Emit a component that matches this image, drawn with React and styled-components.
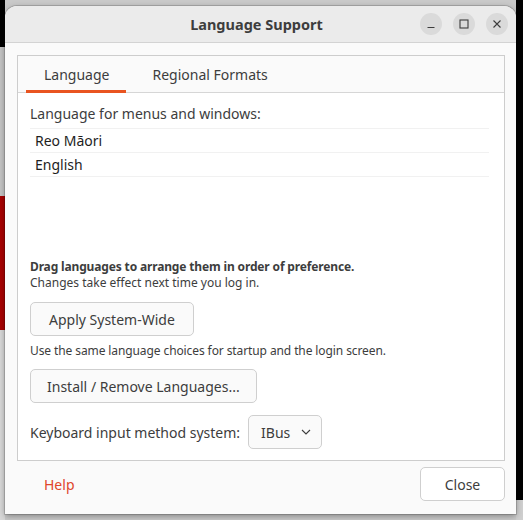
import React, { useState } from "react"
import styled, { createGlobalStyle } from "styled-components"

const GlobalStyle = createGlobalStyle`
  html, body {
    margin: 0;
    padding: 0;
    width: 523px;
    height: 520px;
    overflow: hidden;
  }
  body {
    font-family: "Noto Sans", "Open Sans", sans-serif;
    color: #3d3d3d;
  }
`

const Desktop = styled.div`
  width: 523px;
  height: 520px;
  box-sizing: border-box;
  padding: 6px 7px 0 5px;
  background:
    linear-gradient(to bottom, #000 0, #000 47px, #c4c4c4 47px, #c4c4c4 196px, #a80000 196px, #a80000 330px, #d8d8d8 330px) left top / 5px 100% no-repeat,
    linear-gradient(to bottom, #000 0, #000 500px, #cfcfcf 500px) right top / 7px 100% no-repeat,
    #c9c9c9;
`

const Window = styled.div`
  width: 511px;
  height: 508px;
  background: #fafafa;
  border-radius: 12px 12px 0 0;
  box-shadow: 0 0 0 1px rgba(0, 0, 0, 0.15), 0 2px 6px rgba(0, 0, 0, 0.35);
  display: flex;
  flex-direction: column;
  overflow: hidden;
`

const TitleBar = styled.div`
  height: 36px;
  flex: none;
  background: #ebebeb;
  border-bottom: 1px solid #d3d3d3;
  display: grid;
  grid-template-columns: 1fr auto 1fr;
  align-items: center;
  padding: 0 8px 0 0;
`

const Title = styled.div`
  grid-column: 2;
  font-weight: 700;
  font-size: 14.5px;
  color: #3d3d3d;
`

const Controls = styled.div`
  grid-column: 3;
  justify-self: end;
  display: flex;
  gap: 11px;
`

const CtrlButton = styled.button`
  width: 22px;
  height: 22px;
  border-radius: 50%;
  border: none;
  background: #dadada;
  padding: 0;
  display: flex;
  align-items: center;
  justify-content: center;
  color: #3d3d3d;
`

const Body = styled.div`
  flex: 1;
  display: flex;
  flex-direction: column;
  padding: 12px 11px 12px 12px;
`

const Frame = styled.div`
  height: 406px;
  box-sizing: border-box;
  border: 1px solid #cdcdcd;
  display: flex;
  flex-direction: column;
`

const TabHeader = styled.div`
  height: 37px;
  flex: none;
  box-sizing: border-box;
  border-bottom: 1px solid #d6d6d6;
  background: #fafafa;
  display: flex;
  gap: 8px;
  padding-left: 8px;
`

const Tab = styled.div`
  padding: 0 17px 0 18px;
  display: flex;
  align-items: center;
  font-size: 14px;
  color: #3d3d3d;
  position: relative;
  box-sizing: border-box;
  &::after {
    content: "";
    position: absolute;
    left: 0;
    right: 0;
    bottom: -1px;
    height: 3px;
    background: ${(p) => (p.$active ? "#e95420" : "transparent")};
  }
`

const Content = styled.div`
  flex: 1;
  background: #fff;
  padding: 12px 13px 0 12px;
  display: flex;
  flex-direction: column;
`

const Label = styled.div`
  font-size: 14px;
  color: #3d3d3d;
  line-height: 18px;
`

const List = styled.div`
  margin-top: 5px;
  border-top: 1px solid #f1f1f1;
  margin-right: 2px;
`

const Row = styled.div`
  height: 23px;
  border-bottom: 1px solid #f1f1f1;
  display: flex;
  align-items: center;
  padding-left: 5px;
  font-size: 14px;
  color: #1e1e1e;
`

const Hint = styled.div`
  margin-top: 82px;
  font-size: 12px;
  line-height: 16px;
  color: #3d3d3d;
`

const Strong = styled.div`
  font-weight: 700;
  letter-spacing: -0.15px;
`

const Button = styled.button`
  font-family: inherit;
  font-size: 14px;
  color: #3d3d3d;
  background: #fafafa;
  border: 1px solid #cfcfcf;
  border-radius: 5px;
  height: 34px;
  padding: 0 ${(p) => p.$px || 16}px;
  align-self: flex-start;
  margin-top: ${(p) => p.$mt || 0}px;
`

const Note = styled.div`
  font-size: 12px;
  letter-spacing: -0.1px;
  margin-top: 6px;
  color: #3d3d3d;
`

const InputRow = styled.div`
  margin-top: 12px;
  display: flex;
  align-items: center;
  gap: 8px;
  font-size: 14px;
`

const Select = styled.button`
  font-family: inherit;
  font-size: 14px;
  color: #3d3d3d;
  background: #fafafa;
  border: 1px solid #cfcfcf;
  border-radius: 5px;
  height: 34px;
  padding: 0 10px 0 12px;
  display: flex;
  align-items: center;
  gap: 11px;
`

const Footer = styled.div`
  display: flex;
  justify-content: space-between;
  align-items: center;
  margin-top: 6px;
`

const HelpLink = styled.span`
  color: #e0462b;
  font-size: 14px;
  margin-left: 27px;
`

const CloseButton = styled(Button)`
  width: 85px;
  padding: 0;
  background: #fff;
  align-self: center;
`

export default function App() {
  const [tab, setTab] = useState(0)
  const langs = ["Reo Māori", "English"]

  return (
    <>
      <GlobalStyle />
      <Desktop>
        <Window>
          <TitleBar>
            <Title>Language Support</Title>
            <Controls>
              <CtrlButton aria-label="Minimize">
                <svg width="10" height="10" viewBox="0 0 10 10">
                  <path d="M1.5 8.5h7" stroke="#3d3d3d" strokeWidth="1.1" />
                </svg>
              </CtrlButton>
              <CtrlButton aria-label="Maximize">
                <svg width="10" height="10" viewBox="0 0 10 10">
                  <rect x="1" y="1" width="8" height="8" fill="none" stroke="#3d3d3d" strokeWidth="1.1" />
                </svg>
              </CtrlButton>
              <CtrlButton aria-label="Close">
                <svg width="10" height="10" viewBox="0 0 10 10">
                  <path d="M1.5 1.5l7 7M8.5 1.5l-7 7" stroke="#3d3d3d" strokeWidth="1.1" />
                </svg>
              </CtrlButton>
            </Controls>
          </TitleBar>
          <Body>
            <Frame>
              <TabHeader>
                <Tab $active={tab === 0} onClick={() => setTab(0)}>Language</Tab>
                <Tab $active={tab === 1} onClick={() => setTab(1)}>Regional Formats</Tab>
              </TabHeader>
              <Content>
                <Label>Language for menus and windows:</Label>
                <List>
                  {langs.map((l) => (
                    <Row key={l}>{l}</Row>
                  ))}
                </List>
                <Hint>
                  <Strong>Drag languages to arrange them in order of preference.</Strong>
                  Changes take effect next time you log in.
                </Hint>
                <Button $mt={11} $px={18}>Apply System-Wide</Button>
                <Note>Use the same language choices for startup and the login screen.</Note>
                <Button $mt={10}>Install / Remove Languages...</Button>
                <InputRow>
                  Keyboard input method system:
                  <Select>
                    IBus
                    <svg width="10" height="6" viewBox="0 0 10 6">
                      <path d="M1 1l4 4 4-4" fill="none" stroke="#3d3d3d" strokeWidth="1.1" />
                    </svg>
                  </Select>
                </InputRow>
              </Content>
            </Frame>
            <Footer>
              <HelpLink>Help</HelpLink>
              <CloseButton>Close</CloseButton>
            </Footer>
          </Body>
        </Window>
      </Desktop>
    </>
  )
}
